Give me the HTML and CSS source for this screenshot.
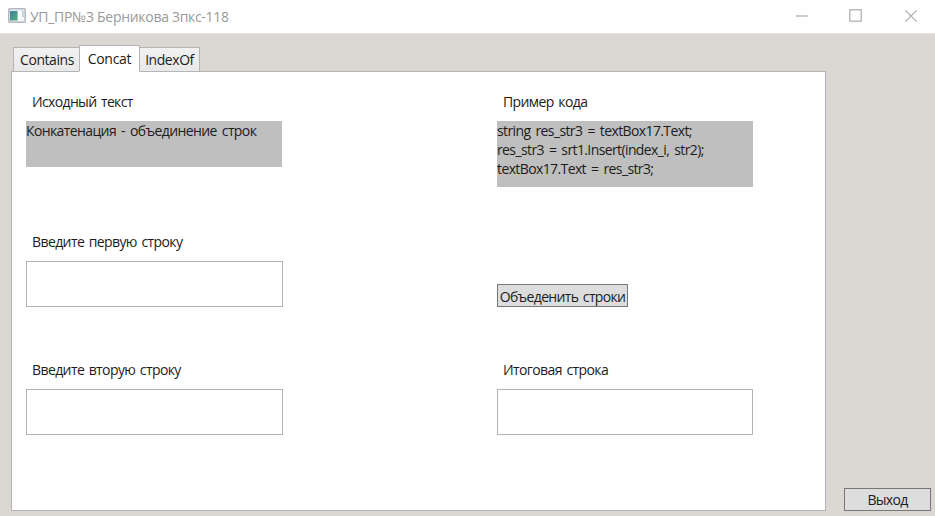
FILE: index.html
```html
<!DOCTYPE html>
<html lang="ru">
<head>
<meta charset="utf-8">
<title>УП_ПР№3 Берникова 3пкс-118</title>
<link rel="stylesheet" href="styles.css">
</head>
<body>
<div class="window">
  <header class="titlebar">
    <svg class="app-icon" width="18" height="15" viewBox="0 0 18 15">
      <defs><linearGradient id="g" x1="0" y1="0" x2="1" y2="1"><stop offset="0" stop-color="#3c7fa8"/><stop offset="1" stop-color="#56b070"/></linearGradient></defs>
      <rect x=".75" y=".75" width="16.5" height="13.5" rx="1" fill="#e9ecf0" stroke="#b3b8c1" stroke-width="1.5"/>
      <rect x="2" y="3" width="7.5" height="9.5" fill="url(#g)"/>
      <rect x="10" y="3" width="6" height="9.5" fill="#fafbfc"/>
      <rect x="14.2" y="3" width="1.4" height="6" fill="#a9c4c4"/>
    </svg>
    <h1 class="title"><span class="t-title">УП_ПР№3 Берникова 3пкс-118</span></h1>
    <div class="controls">
      <svg width="12" height="12" viewBox="0 0 12 12"><path d="M0 6H12"/></svg>
      <svg width="13" height="13" viewBox="0 0 13 13"><rect x=".8" y=".8" width="11.4" height="11.4"/></svg>
      <svg width="12" height="12" viewBox="0 0 12 12"><path d="M.4 .4L11.6 11.6M11.6 .4L.4 11.6"/></svg>
    </div>
  </header>
  <main class="client">
    <section class="tabs">
      <nav class="tablist">
        <div class="tab first"><span class="t-contains">Contains</span></div>
        <div class="tab active"><span class="t-concat">Concat</span></div>
        <div class="tab last"><span class="t-index">IndexOf</span></div>
      </nav>
      <div class="panel">
        <div class="field">
          <label><span class="t-source">Исходный текст</span></label>
          <div class="note"><span class="t-note">Конкатенация - объединение строк</span></div>
        </div>
        <div class="field">
          <label><span class="t-example">Пример кода</span></label>
          <div class="note code">
            <div><span class="t-code1">string res_str3 = textBox17.Text;</span></div>
            <div><span class="t-code2">res_str3 = srt1.Insert(index_i, str2);</span></div>
            <div><span class="t-code3">textBox17.Text = res_str3;</span></div>
          </div>
        </div>
        <div class="field">
          <label><span class="t-first">Введите первую строку</span></label>
          <div class="input"></div>
        </div>
        <div class="field action">
          <div class="button join"><span class="t-join">Объеденить строки</span></div>
        </div>
        <div class="field">
          <label><span class="t-second">Введите вторую строку</span></label>
          <div class="input"></div>
        </div>
        <div class="field">
          <label><span class="t-result">Итоговая строка</span></label>
          <div class="input result"></div>
        </div>
      </div>
    </section>
    <div class="button exit"><span class="t-exit">Выход</span></div>
  </main>
</div>
</body>
</html>
```
FILE: styles.css
```css
* { box-sizing: border-box; }
body {
  margin: 0;
  font: 14px/19px "Open Sans", "Noto Sans", sans-serif;
  letter-spacing: -0.45px;
  color: #1c1c1c;
}
.window { width: 935px; height: 516px; display: flex; flex-direction: column; overflow: hidden; background: #dbd8d3; }
.titlebar { height: 34px; flex: none; display: flex; align-items: center; padding: 0 18px 2px 8px; background: #fff; border-bottom: 1px solid #e6e4e1; }
.app-icon { flex: none; margin-right: 4px; }
.title { margin: 0; padding-top: 1px; font-size: 14px; font-weight: 400; color: #999; white-space: nowrap; }
.controls { margin-left: auto; display: flex; align-items: center; gap: 42px; fill: none; stroke: #aaa; stroke-width: 1.2; }
.controls svg:nth-child(2) { margin: 0 1px 0 -1px; }
.client { flex: 1; display: flex; justify-content: space-between; align-items: flex-end; padding: 0 4px 5px 11px; }
.tabs { width: 815px; }
.tablist { display: flex; align-items: flex-end; height: 27px; padding-left: 2px; margin-bottom: -1px; position: relative; }
.tab { height: 25px; display: flex; justify-content: center; align-items: center; border: 1px solid #b4b4b4; background: linear-gradient(#f1f1f1, #e8e8e8); white-space: nowrap; }
.tab.first { width: 66px; border-right: 0; padding-left: 1px; }
.tab.active { width: 61px; height: 27px; background: #fff; border-bottom-color: #fff; }
.tab.last { width: 60px; border-left: 0; }
.panel {
  height: 440px; padding: 20px 0 0 14px;
  display: grid; grid-template-columns: 471px 257px; grid-template-rows: 140px 128px 1fr;
  background: #fff; border: 1px solid #b4b4b4;
}
.field { width: 257px; }
.field label { display: block; height: 20px; margin-bottom: 9px; padding-left: 6px; white-space: nowrap; }
.note { width: 256px; height: 46px; background: #bfbfbf; white-space: nowrap; }
.note.code { height: 66px; }
.input { height: 46px; border: 1px solid #b2b3b9; background: #fff; }
.input.result { width: 256px; }
.button { height: 23px; display: flex; justify-content: center; align-items: center; background: #ddd; border: 1px solid #777; white-space: nowrap; }
.action { padding-top: 52px; }
.join { width: 131px; padding-top: 2px; }
.exit { width: 87px; }
.t-title { letter-spacing: -0.3px; }
.t-concat { letter-spacing: -0.3px; }
.t-source { letter-spacing: -0.65px; word-spacing: 1.5px; }
.t-example, .t-first, .t-second, .t-result { letter-spacing: -0.6px; word-spacing: 1.5px; }
.t-note, .t-code1, .t-code2, .t-code3 { letter-spacing: -0.61px; word-spacing: 2px; }
.t-join { letter-spacing: -0.65px; word-spacing: 1.5px; }
.t-exit { letter-spacing: -0.7px; }
```
